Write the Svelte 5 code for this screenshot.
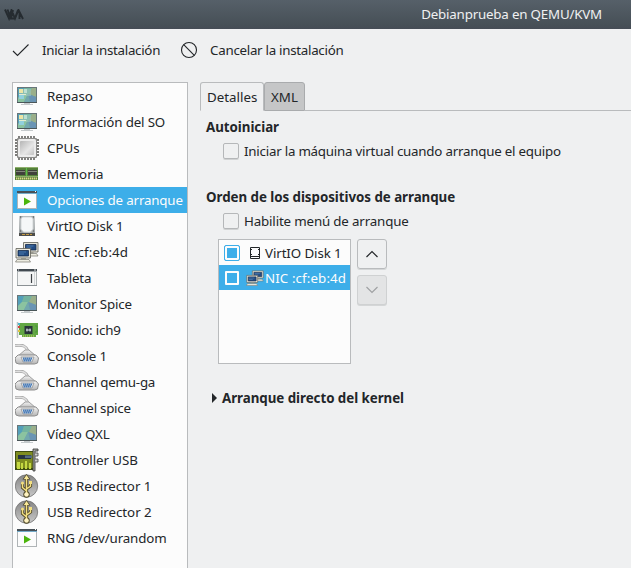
<script>
  const devices = [
    ['overview', 'Repaso', 0],
    ['overview', 'Información del SO', -0.15],
    ['cpu', 'CPUs', 0],
    ['memory', 'Memoria', 0],
    ['run', 'Opciones de arranque', -0.17],
    ['disk', 'VirtIO Disk 1', -0.1],
    ['nic', 'NIC :cf:eb:4d', 0.1],
    ['tablet', 'Tableta', -0.12],
    ['display', 'Monitor Spice', -0.12],
    ['sound', 'Sonido: ich9', -0.2],
    ['serial', 'Console 1', -0.15],
    ['serial', 'Channel qemu-ga', -0.22],
    ['serial', 'Channel spice', -0.25],
    ['display', 'Vídeo QXL', -0.1],
    ['controller', 'Controller USB', -0.08],
    ['usb', 'USB Redirector 1', -0.06],
    ['usb', 'USB Redirector 2', -0.04],
    ['run', 'RNG /dev/urandom', -0.13]
  ];
  let selected = $state(4);
  let tab = $state('details');
  const teeth = [4, 7, 10, 13, 16, 19];
</script>

<svg class="defs" aria-hidden="true">
  <defs>
    <linearGradient id="screen" x1="0" y1="0" x2="1" y2="1">
      <stop offset="0" stop-color="#5d9fc0" /><stop offset=".45" stop-color="#79ae9a" /><stop offset="1" stop-color="#5590b4" />
    </linearGradient>
    <linearGradient id="chip" x1="0" y1="0" x2="1" y2="1">
      <stop offset="0" stop-color="#b5b5b5" /><stop offset=".6" stop-color="#e6e6e6" /><stop offset="1" stop-color="#c4c4c4" />
    </linearGradient>
    <linearGradient id="ball" x1="0" y1="0" x2="0" y2="1">
      <stop offset="0" stop-color="#858585" /><stop offset="1" stop-color="#c9c9c9" />
    </linearGradient>
    <linearGradient id="plug" x1="0" y1="0" x2="0" y2="1">
      <stop offset="0" stop-color="#f4f4f4" /><stop offset="1" stop-color="#b4b4b4" />
    </linearGradient>
  </defs>
</svg>

{#snippet icon(kind, size = 24)}
  <svg class="icon" width={size} height={size} viewBox="0 0 24 24">
    {#if kind === 'overview' || kind === 'display'}
      <path d="M9 19h6v1h3v1H6v-1h3z" fill="#c5cacc" />
      <rect x="2" y="3" width="20" height="16" fill="#68767a" />
      <rect x="3" y="4" width="18" height="14" fill="url(#screen)" />
      <path d="M3 4h6l-2 6-4 4z" fill="#549fb9" />
      <path d="M9 4h8l-3 6H7z" fill="#73b3a0" />
      <path d="M7 10h6l-4 8H3v-4z" fill="#8bc3a0" />
      <path d="M17 4h4v9l-7-3z" fill="#9aaf8a" />
      <path d="M13 10l8 3v5h-6z" fill="#6a94b4" />
      <path d="M13 10l2 8H9z" fill="#72a7ad" />
      <path d="M2 18h20v1H2z" fill="#4b5659" />
      {#if kind === 'overview'}
        <path d="M4 5h12v7H4z" fill="#9cc7bd" opacity=".6" />
        <path d="M4 5h4v4H4z" fill="#ece5a6" /><path d="M9 5h3v4H9z" fill="#bddfd1" />
        <path d="M4 10h5v5H4z" fill="#91d0dd" /><path d="M4 10h7v1H4z" fill="#e2ecd0" />
      {/if}
    {:else if kind === 'cpu'}
      {#each teeth as t}
        <path d="M{t} 0v24M0 {t}h24" stroke="#7c7c7a" stroke-width="1.9" />
      {/each}
      <rect x="2" y="2" width="20" height="20" rx="1" fill="#8b8b89" />
      <rect x="3" y="3" width="18" height="18" rx="1.500" fill="#ececec" />
      <rect x="5" y="5" width="14" height="14" rx="1" fill="url(#chip)" />
    {:else if kind === 'memory'}
      <path d="M0 5h23v13H0z" fill="#54803a" />
      <path d="M0 5h23v1H0zM0 14h23v1H0z" fill="#8fb06d" />
      <path d="M1 8h9v5H1zM13 8h9v5h-9z" fill="#40413c" />
      <path d="M1 9h9v1H1zM13 9h9v1h-9z" fill="#83877c" />
      <path d="M1 16.500h21" stroke="#ddd88a" stroke-width="2" stroke-dasharray="1.400 .6" />
      <path d="M11.500 6v8" stroke="#5bc149" />
    {:else if kind === 'run'}
      <rect x="2.500" y="3.500" width="19" height="17" fill="#fcfcfc" stroke="#afb4b6" />
      <path d="M2 3h20v2H2z" fill="#475057" /><path d="M2 5h20v1H2z" fill="#74abc8" />
      <path d="M20 3.500h1" stroke="#fff" /><path d="M9 9.500l7 4-7 4z" fill="#4bb50b" />
    {:else if kind === 'disk'}
      <path d="M4 18h16v4H4z" fill="#4c4d4c" />
      <path d="M4.500 2h15L20 19H4z" fill="#a0a5a7" />
      <path d="M7.500 3h9l1.500 2v10l-2.500 3h-7L6 15V5z" fill="#f5f7f8" stroke="#d3d7d8" />
      <path d="M5 3h1M18 3h1M5 17h1M18 17h1" stroke="#555" stroke-width="1.200" />
      <path d="M7 20.500h10" stroke="#c49a42" stroke-dasharray="3 1" />
    {:else if kind === 'nic'}
      {#each [[8.500, 2], [1, 8]] as [x, y]}
        <g transform="translate({x} {y})">
          <path d="M0 .5h14.500v9.500H0z" fill="#e6e5da" stroke="#5e5e57" stroke-width=".8" />
          <path d="M2 2.500h10.500v5.500H2z" fill="#234c83" stroke="#172b4b" stroke-width=".8" />
          <path d="M3 4h7M3 6h5" stroke="#5585b7" stroke-width=".8" />
          <path d="M5 10h5v1.500H5z" fill="#97978d" />
          <path d="M1 11.500h12l1.500 2.500H-.5z" fill="#eeede2" stroke="#77776f" stroke-width=".7" />
        </g>
      {/each}
    {:else if kind === 'tablet'}
      <path d="M2.500 3.500h19v16h-19z" fill="#f4f5f5" stroke="#aeb3b5" />
      <path d="M2 3h20v2H2z" fill="#414950" /><path d="M2 5h20v1H2z" fill="#a4aaad" />
      <path d="M3 4h1M19 4h2" stroke="#ddd" />
      <path d="M16.500 8v9" stroke="#3d4245" stroke-width="1.200" /><path d="M19.500 6v13" stroke="#d3d6d7" />
      <path d="M2 19.500h20" stroke="#8b9194" />
    {:else if kind === 'sound'}
      <path d="M4 5h19v12h-2v2H7v-2H4z" fill="#63a744" />
      <path d="M2.500 4v16" stroke="#b9c0c2" stroke-width="1.500" />
      <path d="M3 8h2v2H3z" fill="#d6443b" /><path d="M3 5h2v2H3z" fill="#48b9cf" /><path d="M3 12h2v2H3z" fill="#e0c740" />
      <path d="M9.500 8h8v8h-8z" fill="#29343a" /><path d="M11 12h5M12 10.500v3M15 10.500v3" stroke="#d4dddf" />
      <path d="M8 18h12" stroke="#ded16a" stroke-dasharray="1 1" /><path d="M20 8h2v6h-2" fill="none" stroke="#4b953b" />
    {:else if kind === 'serial'}
      <path d="M0 1.500C8 .5 11 2 13 7" fill="none" stroke="#a5a5a5" stroke-width="3" />
      <path d="M0 1.500C8 .5 11 2 13 7" fill="none" stroke="#e0e0e0" stroke-width="1.500" />
      <path d="M3 12l7-6h4l7 6z" fill="url(#plug)" stroke="#a0a0a0" />
      <path d="M3 11h18l2.500 3-1 5-3 1H4l-3-1-1-5z" fill="url(#plug)" stroke="#8d8d8d" />
      <path d="M6 13h13l-2 5H8z" fill="#dfe5eb" stroke="#8c8c8c" stroke-width=".7" />
      <path d="M8 14.500h9M8.500 16.500h8" stroke="#4a7cb8" stroke-width="1.800" stroke-dasharray="1.600 .4" />
    {:else if kind === 'controller'}
      <path d="M0 3h20v19H0z" fill="#3f4d12" />
      <path d="M1 4h18v16H1z" fill="#7f8d20" />
      <path d="M2 14h3v7H2zM6 15h2v6H6zM10 13h2v8h-2zM14 15h2v6h-2z" fill="#c5d943" />
      <path d="M3 7h13v4H3z" fill="#263441" /><path d="M10 7.500h7v2.500h-7z" fill="#536b82" />
      <path d="M18 1h5v2h-3v20h-2z" fill="#a6a8a3" stroke="#333" stroke-width=".8" />
      <path d="M20 5h3v3h-3M20 11h3v3h-3" fill="#ccc" stroke="#444" stroke-width=".8" />
    {:else if kind === 'usb'}
      <circle cx="11.500" cy="12" r="11.200" fill="url(#ball)" stroke="#737373" stroke-width=".8" />
      <g fill="none" stroke="#4c4524" stroke-width="3.200"><path d="M11.500 21V3M11.500 17L7.500 13.500V8M11.500 15l4-3V7" /></g>
      <path d="M7.500 5.500L11.500 0l4 5.500z" fill="#4c4524" /><circle cx="11.500" cy="20.500" r="3.200" fill="#4c4524" />
      <g fill="none" stroke="#f2df83" stroke-width="1.500"><path d="M11.500 20V3M11.500 17L7.500 13.500V8M11.500 15l4-3V7" /></g>
      <path d="M8.800 5L11.500 1l2.700 4z" fill="#f8e99b" /><circle cx="11.500" cy="20.500" r="2.300" fill="#fff3c2" />
      <circle cx="7.500" cy="9" r="1.600" fill="#f2df83" /><path d="M14 7h3v3h-3z" fill="#f2df83" />
    {/if}
  </svg>
{/snippet}

<div class="window">
  <header>
    <svg width="20" height="12" viewBox="0 0 20 12"><path d="M1 .5l4 9L7.500 1l3.500 8.500L14.500 1l4.500 9M3.500 .5l3 8M9 1L7 9.500h4M14 1l-3 8M15.500 4v6" fill="none" stroke="#252b30" stroke-width="1.900" /></svg>
    <h1>Debianprueba en QEMU/KVM</h1>
  </header>
  <div class="toolbar">
    <button class="plain begin">
      <svg width="18" height="18" viewBox="0 0 18 18"><path d="M1 10l4.500 4.500L16.500 3.500" /></svg>
      <span>Iniciar la instalación</span>
    </button>
    <button class="plain cancel">
      <svg width="18" height="18" viewBox="0 0 18 18"><circle cx="9" cy="9" r="7.500" /><path d="M3.700 3.700l10.600 10.600" /></svg>
      <span>Cancelar la instalación</span>
    </button>
  </div>
  <div class="body">
    <nav>
      {#each devices as [kind, label, tracking], i}
        <button class="row" class:selected={selected === i} onclick={() => (selected = i)}>
          {@render icon(kind)}<span style:letter-spacing="{tracking}px">{label}</span>
        </button>
      {/each}
    </nav>
    <main>
      <div class="tabs">
        <button class="tab details" class:active={tab === 'details'} onclick={() => (tab = 'details')}>Detalles</button>
        <button class="tab xml" class:active={tab === 'xml'} onclick={() => (tab = 'xml')}>XML</button>
        <i></i>
      </div>
      <section>
        <h2>Autoiniciar</h2>
        <div class="check auto"><i class="box"></i><span>Iniciar la máquina virtual cuando arranque el equipo</span></div>
        <h2 class="order">Orden de los dispositivos de arranque</h2>
        <div class="check menu"><i class="box"></i><span>Habilite menú de arranque</span></div>
        <div class="boot">
          <div class="list">
            <div class="item">
              <i class="box checked"></i>
              <svg class="small" width="16" height="16" viewBox="0 0 16 16"><path d="M3.500 2.500h9v11h-9z" fill="#fcfcfc" stroke="#232629" /><path d="M3 11.500h10M4 4.500h1M11 4.500h1M4 9.500h1M11 9.500h1" stroke="#232629" /></svg>
              <span class="disk">VirtIO Disk 1</span>
            </div>
            <div class="item current"><i class="box"></i>{@render icon('nic', 18)}<span class="nic">NIC :cf:eb:4d</span></div>
          </div>
          <div class="moves">
            <button aria-label="Subir"><svg width="14" height="10" viewBox="0 0 14 10"><path d="M1.500 8L7 2.500 12.500 8" /></svg></button>
            <button aria-label="Bajar" disabled><svg width="14" height="10" viewBox="0 0 14 10"><path d="M1.500 2L7 7.500 12.500 2" /></svg></button>
          </div>
        </div>
        <div class="kernel"><svg width="6" height="10"><path d="M0 0l5 5-5 5z" fill="#232629" /></svg><h2>Arranque directo del kernel</h2></div>
      </section>
    </main>
  </div>
</div>

<style>
  :global(body) { background: #eff0f1; }
  .defs { position: absolute; width: 0; height: 0; }
  .window { height: 568px; overflow: hidden; display: flex; flex-direction: column; background: #eff0f1; color: #232629; font: 13.333px/18px "Noto Sans", sans-serif; }
  button { font: inherit; color: inherit; border: 0; margin: 0; padding: 0; background: none; text-align: left; }
  svg { display: block; flex: none; }
  span, h1, h2, .tab { white-space: nowrap; }
  header { height: 29px; flex: none; box-sizing: border-box; display: flex; justify-content: space-between; padding: 5px 29px 0 4px; background: linear-gradient(#566069, #475057 85%, #454c55); }
  header svg { margin-top: 4px; }
  h1 { font: inherit; margin: 0; color: #eff0f1; letter-spacing: -0.19px; }
  .toolbar { height: 53px; flex: none; box-sizing: border-box; display: flex; gap: 20px; padding: 12px 0 0 12px; }
  .plain { display: flex; height: 18px; align-items: center; gap: 12px; letter-spacing: -0.28px; }
  .plain svg { fill: none; stroke: #232629; stroke-width: 1.1; }
  .body { flex: 1; min-height: 0; display: flex; }
  nav { width: 176px; box-sizing: border-box; margin-left: 12px; flex: none; border: solid #b9bbbd; border-width: 1px 1px 0; background: #fcfcfc; }
  .row { display: flex; width: 100%; height: 26px; align-items: center; gap: 8px; padding-left: 2px; }
  .selected, .current { background: #3daee9; color: #fcfcfc; }
  main { flex: 1; min-width: 0; margin-left: 12px; }
  .tabs { display: flex; height: 29px; }
  .tab { box-sizing: border-box; height: 29px; border: 1px solid #a9abad; border-radius: 3px 3px 0 0; background: #c5c6c7; padding: 1px 6px 0; }
  .tab.active { border-color: #b9bbbd; border-bottom-color: transparent; background: #eff0f1; }
  .details { width: 64px; }
  .xml { width: 41px; }
  .tabs i { flex: 1; border-bottom: 1px solid #b9bbbd; }
  section { padding: 7px 0 0 6px; }
  h2 { font: bold 13.333px/18px "Noto Sans", sans-serif; margin: 0; letter-spacing: -0.04px; }
  .check { display: flex; align-items: center; height: 18px; margin: 6px 0 0 17px; gap: 5px; }
  .auto { letter-spacing: -0.225px; }
  .menu { letter-spacing: -0.16px; }
  .disk { letter-spacing: -0.1px; }
  .nic { letter-spacing: 0.1px; }
  .box { box-sizing: border-box; width: 16px; height: 16px; flex: none; border: 1px solid #b5b7b9; border-radius: 2px; box-shadow: 0 1px 0 #d0d2d3; }
  .order { margin-top: 28px; }
  .boot { display: flex; gap: 6px; margin: 9px 0 0 12px; }
  .list { box-sizing: border-box; width: 133px; height: 125px; border: 1px solid #b9bbbd; background: #fcfcfc; }
  .item { display: flex; align-items: center; height: 25px; padding-left: 5px; }
  .item .small { margin: 0 2px 0 7px; }
  .item :global(.icon) { margin: 0 1px 0 6px; }
  .checked { border-color: #3daee9; background: #3daee9; box-shadow: inset 0 0 0 2px #fcfcfc; }
  .current .box { width: 14px; height: 14px; margin: 0 1px; border: 2px solid #fcfcfc; border-radius: 1px; box-shadow: none; }
  .moves { display: flex; flex-direction: column; gap: 6px; }
  .moves button { box-sizing: border-box; width: 30px; height: 30px; display: flex; align-items: center; justify-content: center; border: 1px solid #b9bbbd; border-radius: 3px; box-shadow: 0 1px 0 #d4d6d7; }
  .moves svg { fill: none; stroke: #232629; stroke-width: 1.2; }
  .moves button:disabled { background: #e3e4e5; border-color: #cfd1d2; }
  .moves button:disabled svg { stroke: #9fa1a3; }
  .kernel { display: flex; align-items: center; gap: 4px; margin: 25px 0 0 6px; }
</style>
